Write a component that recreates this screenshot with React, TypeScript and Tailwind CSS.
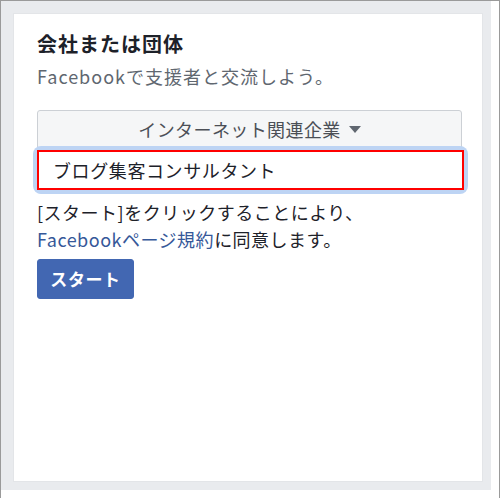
import React, { useState } from "react";

const font = { fontFamily: '"Noto Sans CJK JP", "Noto Sans", sans-serif' };

export default function App() {
  const [value, setValue] = useState("ブログ集客コンサルタント");

  return (
    <div
      className="w-[500px] h-[498px] bg-white border-l border-t border-r border-[#9a9a9a] text-[#1d2129]"
      style={font}
    >
      <div className="w-[490px] h-[489px] bg-[#e9ebee] pt-[12px] pl-[12px] pr-[8px] pb-[8px]">
        <div className="h-full bg-white border border-[#e3e5e8] px-[23px] pt-[16px]">
          <h2 className="text-[20px] font-bold leading-[28px] tracking-[1px]">
            会社または団体
          </h2>
          <p className="mt-[6px] text-[18px] leading-[24px] text-[#606770] tracking-[1px]">
            Facebookで支援者と交流しよう。
          </p>

          <button
            type="button"
            className="mt-[22px] w-[425px] h-[39px] flex items-center justify-center gap-[8px] bg-[#f5f6f7] border border-[#ccd0d5] rounded-t-[3px] text-[18px] text-[#4b4f56] tracking-[0.4px]"
          >
            インターネット関連企業
            <svg width="12" height="8" viewBox="0 0 12 8" className="mt-[1px]">
              <path d="M0 0h12L6 7z" fill="#606770" />
            </svg>
          </button>

          <div className="mt-[1px] rounded-[4px] shadow-[0_0_0_4px_#bdd4f4] w-[427px]">
            <input
              value={value}
              onChange={(e) => setValue(e.target.value)}
              className="block w-full h-[40px] border-2 border-[#f00] px-[14px] text-[18px] text-[#1d2129] tracking-[0.6px] outline-none bg-white"
              style={font}
            />
          </div>

          <p className="mt-[9px] text-[18px] leading-[27px] text-[#1d2129] tracking-[0.5px]">
            [スタート]をクリックすることにより、
            <br />
            <a href="#" className="text-[#365899]">
              Facebookページ規約
            </a>
            に同意します。
          </p>

          <button
            type="button"
            className="mt-[6px] w-[97px] h-[40px] bg-[#4267b2] border border-[#4267b2] rounded-[3px] text-white text-[17px] font-bold tracking-[0.6px]"
          >
            スタート
          </button>
        </div>
      </div>
    </div>
  );
}
